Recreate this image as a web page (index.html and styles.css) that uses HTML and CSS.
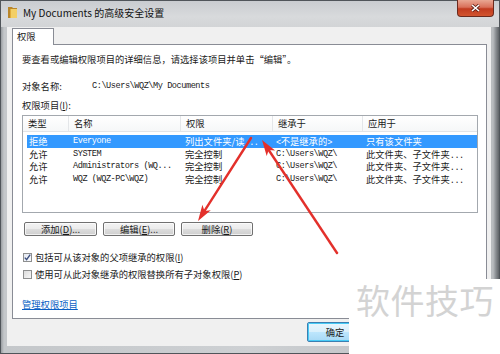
FILE: index.html
```html
<!DOCTYPE html>
<html lang="zh-CN">
<head>
    <meta charset="UTF-8">
    <title>My Documents 的高级安全设置</title>
    <link rel="stylesheet" href="styles.css">
</head>
<body>
    <div class="window">
        <div class="titlebar">
            <svg class="folder" width="9" height="11" viewBox="0 0 9 11">
                <path d="M0 0h4l1 1h4v10H0z" fill="#b9862a"/>
                <path d="M2 2h7v9H2z" fill="#f3cf66"/>
                <path d="M2 2h1v9H2z" fill="#e0ac3c"/>
            </svg>
            <span class="title">My Documents 的高级安全设置</span>
            <div class="close">
                <svg width="9" height="8" viewBox="0 0 9 8">
                    <path d="M1 1l7 6M8 1L1 7" stroke="#5a1e14" stroke-width="3"/>
                    <path d="M1 1l7 6M8 1L1 7" stroke="#fff" stroke-width="1.6"/>
                </svg>
            </div>
        </div>

        <div class="client">
            <div class="tabs"><div class="tab">权限</div></div>

            <div class="panel">
                <p class="intro">要查看或编辑权限项目的详细信息，请选择该项目并单击“编辑”。</p>

                <div class="object-row">
                    <span class="object-label">对象名称:</span>
                    <span class="a">C:\Users\WQZ\My Documents</span>
                </div>

                <div class="list-label">权限项目(<u>I</u>):</div>

                <div class="listview">
                    <div class="lv-head">
                        <div>类型</div>
                        <div>名称</div>
                        <div>权限</div>
                        <div>继承于</div>
                        <div>应用于</div>
                    </div>
                    <div class="lv-body">
                        <div class="lv-row selected">
                            <div>拒绝</div>
                            <div class="a">Everyone</div>
                            <div>列出文件夹/读<span class="a">...</span></div>
                            <div><span class="a">&lt;</span>不是继承的<span class="a">&gt;</span></div>
                            <div>只有该文件夹</div>
                        </div>
                        <div class="lv-row">
                            <div>允许</div>
                            <div class="a">SYSTEM</div>
                            <div>完全控制</div>
                            <div class="a">C:\Users\WQZ\</div>
                            <div>此文件夹、子文件夹<span class="a">...</span></div>
                        </div>
                        <div class="lv-row">
                            <div>允许</div>
                            <div class="a">Administrators (WQ...</div>
                            <div>完全控制</div>
                            <div class="a">C:\Users\WQZ\</div>
                            <div>此文件夹、子文件夹<span class="a">...</span></div>
                        </div>
                        <div class="lv-row">
                            <div>允许</div>
                            <div class="a">WQZ (WQZ-PC\WQZ)</div>
                            <div>完全控制</div>
                            <div class="a">C:\Users\WQZ\</div>
                            <div>此文件夹、子文件夹<span class="a">...</span></div>
                        </div>
                    </div>
                </div>

                <div class="buttons">
                    <button class="btn w-add">添加(<u>D</u>)...</button>
                    <button class="btn w-edit">编辑(<u>E</u>)...</button>
                    <button class="btn w-del">删除(<u>R</u>)</button>
                </div>

                <div class="check first">
                    <span class="box checked">
                        <svg width="7" height="7" viewBox="0 0 7 7"><path d="M0.8 3.6l1.8 2 3.6-5" fill="none" stroke="#3b4e7e" stroke-width="1.4"/></svg>
                    </span>
                    <span>包括可从该对象的父项继承的权限(<u>I</u>)</span>
                </div>
                <div class="check">
                    <span class="box"></span>
                    <span>使用可从此对象继承的权限替换所有子对象权限(<u>P</u>)</span>
                </div>

                <a class="link" href="#">管理权限项目</a>
            </div>

            <div class="footer">
                <button class="btn default">确定</button>
            </div>
        </div>
    </div>

    <div class="watermark">软件技巧</div>

    <svg class="arrows" width="500" height="354" viewBox="0 0 500 354">
        <g stroke="#e3302b" stroke-width="2.4" stroke-linecap="round" fill="#e3302b">
            <line x1="337" y1="253" x2="268.7" y2="150"/>
            <line x1="251" y1="138" x2="204.5" y2="210.9"/>
        </g>
        <g fill="#e3302b">
            <polygon points="262,140 275.1,150.5 268.7,150 266.7,156.1"/>
            <polygon points="198,221 202.4,204.8 204.5,210.9 210.8,210.2"/>
        </g>
    </svg>
</body>
</html>
```

FILE: styles.css
```css
* {
    box-sizing: border-box;
}
body {
    margin: 0;
    width: 500px;
    height: 354px;
    overflow: hidden;
    position: relative;
    font-family: "Noto Sans CJK SC", "Noto Sans", sans-serif;
    font-size: 9.3px;
    color: #1a1a1a;
}
u {
    text-decoration: underline;
}
.a {
    font-family: "Liberation Mono", monospace;
    font-size: 8.6px;
    letter-spacing: -0.46px;
}

/* window frame */
.window {
    width: 500px;
    height: 354px;
    border: 1px solid #50555a;
    background: linear-gradient(90deg, #9a9ea2 0, #c4c7ca 3px, #cdd0d3 50%, #b9bcbf calc(100% - 6px), #888c90 calc(100% - 3px), #5f6367 100%);
    display: flex;
    flex-direction: column;
}
.titlebar {
    height: 26px;
    display: flex;
    align-items: center;
    gap: 6px;
    padding: 0 0 4px 7px;
    background: linear-gradient(180deg, #c9ccd0, #d8dadc 60%, #d2d4d6);
}
.folder {
    flex: none;
}
.title {
    font-size: 10px;
    color: #111;
}
.close {
    margin-left: auto;
    align-self: flex-start;
    margin-top: -1px;
    margin-right: 5px;
    width: 37px;
    height: 17px;
    border: 1px solid #6b2a1e;
    border-top: none;
    border-radius: 0 0 4px 4px;
    background: linear-gradient(180deg, #e9a793 0, #d9705a 45%, #c13b20 55%, #d2552f 100%);
    display: flex;
    align-items: center;
    justify-content: center;
}

.client {
    flex: 1;
    margin: 0 8px 7px 6px;
    padding: 1px 4px 0 5px;
    background: #f0f0f0;
    display: flex;
    flex-direction: column;
}
.tabs {
    display: flex;
    height: 16px;
    position: relative;
    z-index: 1;
}
.tab {
    height: 17px;
    padding: 0 17px 0 4px;
    line-height: 15px;
    background: #fff;
    border: 1px solid #898c95;
    border-bottom: none;
}
.panel {
    flex: 1;
    background: #fff;
    border: 1px solid #898c95;
    padding: 8px 8px 0 9px;
    display: flex;
    flex-direction: column;
}
.intro {
    margin: 0;
    line-height: 12px;
}
.object-row {
    margin-top: 15px;
    line-height: 12px;
    display: flex;
    align-items: center;
}
.object-label {
    width: 70px;
}
.list-label {
    margin-top: 7px;
    line-height: 12px;
}

/* list view */
.listview {
    margin-top: 4px;
    height: 98px;
    border: 1px solid #a3a8ae;
}
.lv-head {
    height: 16px;
    display: grid;
    grid-template-columns: 46px 112px 92px 90px 1fr;
    background: linear-gradient(180deg, #ffffff, #f6f7f8);
    border-bottom: 1px solid #e2e4e7;
}
.lv-head div {
    line-height: 15px;
    padding-left: 5px;
    border-right: 1px solid #e4e6e9;
}
.lv-head div:last-child {
    border-right: none;
}
.lv-body {
    padding-top: 3px;
}
.lv-row {
    height: 12.5px;
    line-height: 12.5px;
    margin-left: 4px;
    display: grid;
    grid-template-columns: 41px 112px 92px 90px 1fr;
    white-space: nowrap;
}
.lv-row div {
    padding-left: 5px;
    overflow: hidden;
}
.lv-row div:first-child {
    padding-left: 2px;
}
.lv-row div:nth-child(n+4) {
    padding-left: 4px;
}
.lv-row.selected {
    background: #3399ff;
    color: #fff;
}

/* buttons */
.buttons {
    margin-top: 9px;
    margin-left: 2px;
    display: flex;
    gap: 6px;
}
.btn {
    height: 14px;
    padding: 0;
    font: inherit;
    line-height: 12px;
    color: #1a1a1a;
    border: 1px solid #707070;
    border-radius: 2px;
    background: linear-gradient(180deg, #f3f3f3 0, #ebebeb 50%, #dddddd 50%, #cfcfcf 100%);
    box-shadow: inset 0 0 0 1px rgba(255, 255, 255, 0.7);
}
.w-add { width: 73px; }
.w-edit { width: 72px; }
.w-del { width: 72px; }

/* checkboxes */
.check {
    margin-top: 5px;
    margin-left: 1px;
    line-height: 12px;
    display: flex;
    align-items: center;
    gap: 3px;
}
.check.first {
    margin-top: 15px;
}
.box {
    width: 9px;
    height: 9px;
    border: 1px solid #8e8f8f;
    background: linear-gradient(135deg, #dcdcdc, #f7f7f7);
    display: flex;
    align-items: center;
    justify-content: center;
}
.box.checked {
    background: linear-gradient(135deg, #e4e9f2, #fafbfd);
}
.link {
    margin-top: 18px;
    line-height: 12px;
    color: #0a5fc4;
    text-decoration: underline;
    align-self: flex-start;
}

.footer {
    height: 27px;
    padding: 3px 124px 0 0;
    display: flex;
    justify-content: flex-end;
    align-items: flex-start;
}
.btn.default {
    width: 56px;
    height: 20px;
    line-height: 18px;
    border-color: #3c7fb1;
    background: linear-gradient(180deg, #eaf6fd 0, #d9f0fc 50%, #bee6fd 50%, #a7d9f5 100%);
    box-shadow: inset 0 0 0 1px #48cbf6;
}

/* overlays */
.watermark {
    position: absolute;
    left: 349px;
    top: 279px;
    width: 151px;
    height: 75px;
    background: #fff;
    padding-left: 7px;
    font-size: 34px;
    line-height: 42px;
    color: #d3d3d3;
    letter-spacing: 0.5px;
}
.arrows {
    position: absolute;
    left: 0;
    top: 0;
    pointer-events: none;
}
```
